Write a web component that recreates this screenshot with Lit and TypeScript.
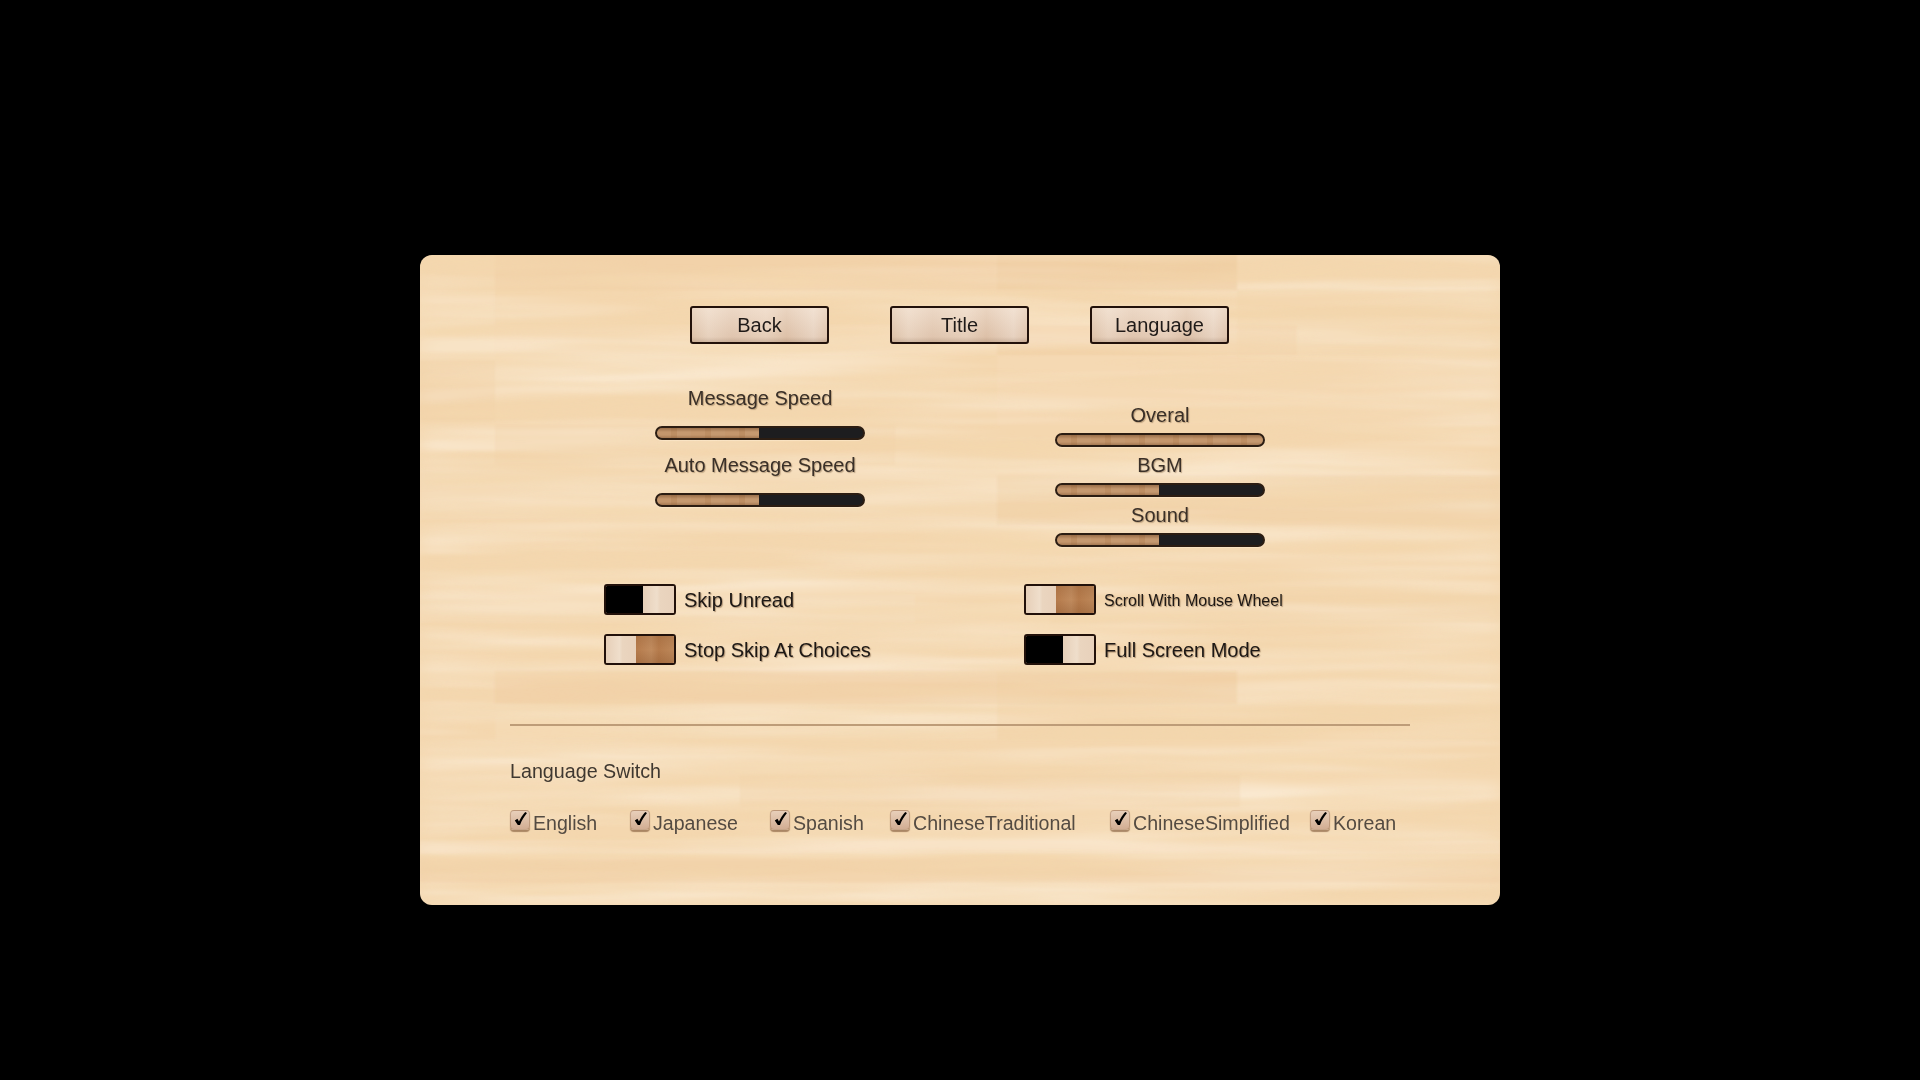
import { LitElement, html, css, svg } from "lit";
import { customElement } from "lit/decorators.js";

const PLANKS: [number, number, number, number, string, number][] = [
  [75, 0, 502, 35, "#eec79a", 0.3],
  [577, 0, 240, 35, "#e9bd8c", 0.3],
  [0, 35, 75, 70, "#f8e3c6", 0.3],
  [0, 105, 75, 60, "#eecba0", 0.25],
  [75, 70, 502, 30, "#f8e2c5", 0.3],
  [577, 70, 300, 30, "#eec79a", 0.25],
  [817, 35, 263, 70, "#f3d3aa", 0.3],
  [75, 170, 400, 40, "#eecba0", 0.2],
  [577, 100, 503, 70, "#f8e2c5", 0.2],
  [0, 215, 577, 50, "#f9e4c8", 0.25],
  [577, 220, 503, 50, "#edc89b", 0.2],
  [75, 416, 502, 33, "#eec79a", 0.28],
  [577, 416, 240, 33, "#e9bd8c", 0.28],
  [0, 340, 495, 28, "#f8e3c6", 0.25],
  [630, 340, 450, 28, "#f0cfa5", 0.25],
  [75, 449, 502, 36, "#f8e2c5", 0.25],
  [577, 449, 503, 36, "#f3d3aa", 0.3],
  [320, 520, 500, 32, "#f0cca0", 0.25],
  [0, 585, 1080, 14, "#f9e6cc", 0.4],
  [0, 605, 1080, 22, "#eecba0", 0.3],
];

const LANGS = ["English", "Japanese", "Spanish", "ChineseTraditional", "ChineseSimplified", "Korean"];

@customElement("app-root")
export class AppRoot extends LitElement {
  static styles = css`
    :host {
      display: flex;
      justify-content: center;
      align-items: flex-start;
      width: 1920px;
      height: 1080px;
      background: #000;
      overflow: hidden;
      font-family: "Liberation Sans", Arial, sans-serif;
      color: #2a2420;
    }
    .panel {
      position: relative;
      box-sizing: border-box;
      width: 1080px;
      height: 650px;
      margin-top: 255px;
      padding-top: 51px;
      border-radius: 12px;
      overflow: hidden;
      background: #f4d7af;
    }
    .wood {
      position: absolute;
      inset: 0;
      width: 100%;
      height: 100%;
    }
    .content {
      position: relative;
    }
    .buttons {
      display: flex;
      justify-content: center;
      gap: 61px;
      padding-right: 1px;
    }
    .btn {
      box-sizing: border-box;
      width: 139px;
      height: 38px;
      display: flex;
      align-items: center;
      justify-content: center;
      border: 2px solid #22110a;
      border-radius: 3px;
      font-size: 20px;
      color: #1f1a18;
      background:
        linear-gradient(180deg, rgba(255, 245, 235, 0.3), rgba(170, 125, 95, 0.08) 85%, rgba(120, 85, 60, 0.25)),
        linear-gradient(90deg, #e2c8b0, #ecd8c5 12%, #e4cbb5 30%, #ebd5c1 55%, #e1c6ae 70%, #ecd9c8 90%, #e4cab3);
    }
    .sliders {
      display: flex;
      justify-content: center;
      gap: 190px;
      margin-top: 39px;
    }
    .col {
      width: 210px;
      display: flex;
      flex-direction: column;
    }
    .col.right {
      margin-top: 17px;
      gap: 3px;
    }
    .col.left {
      gap: 10px;
    }
    .item {
      display: flex;
      flex-direction: column;
    }
    .col.left .item {
      gap: 13px;
    }
    .col.right .item {
      gap: 3px;
    }
    .lab {
      height: 30px;
      line-height: 30px;
      font-size: 20px;
      text-align: center;
      white-space: nowrap;
      color: #3a3028;
      text-shadow: 1px 1px 1px rgba(120, 90, 60, 0.45);
    }
    .track {
      box-sizing: border-box;
      height: 14px;
      border: 2px solid #2c1d12;
      border-radius: 7px;
      background: #1d1d1f;
      overflow: hidden;
      box-shadow: 0 1px 1px rgba(255, 240, 215, 0.5);
    }
    .fill {
      height: 100%;
      background:
        linear-gradient(180deg, rgba(90, 50, 20, 0.4), rgba(90, 50, 20, 0) 40%, rgba(90, 50, 20, 0) 70%, rgba(90, 50, 20, 0.3)),
        repeating-linear-gradient(90deg, #c4966c 0 14px, #bd8e63 14px 20px, #c59970 20px 34px);
    }
    .toggles {
      display: grid;
      grid-template-columns: 420px 420px;
      row-gap: 19px;
      margin: 37px 0 0 184px;
    }
    .row {
      display: flex;
      align-items: center;
      gap: 8px;
      height: 31px;
      font-size: 20px;
      color: #1d1815;
      white-space: nowrap;
      text-shadow: 1px 1px 1px rgba(120, 90, 60, 0.55);
    }
    .row span {
      padding-top: 2px;
    }
    .row.small {
      font-size: 16px;
    }
    .tg {
      box-sizing: border-box;
      width: 72px;
      height: 31px;
      flex: none;
      display: flex;
      border: 2px solid #22110a;
      border-radius: 3px;
      overflow: hidden;
    }
    .tg .light {
      background: linear-gradient(90deg, #e6cfb8, #efdecb 45%, #ead5bf 55%, #e8d1bb);
    }
    .tg .dark {
      background: #000;
      width: 37px;
    }
    .tg.off .light {
      flex: 1;
    }
    .tg.on .light {
      width: 30px;
    }
    .tg .brown {
      flex: 1;
      background:
        linear-gradient(180deg, rgba(110, 60, 25, 0.14), rgba(110, 60, 25, 0) 50%, rgba(110, 60, 25, 0.22)),
        linear-gradient(90deg, #b67b4c, #c08b5e 40%, #b57b4c 60%, #bd885a);
    }
    .rule {
      height: 2px;
      margin: 59px 90px 0;
      background: #bd9c78;
    }
    .switch {
      height: 30px;
      line-height: 29px;
      margin: 31px 90px 0;
      font-size: 19.7px;
      color: #3f3830;
    }
    .langs {
      display: grid;
      grid-template-columns: 120px 140px 120px 220px 200px auto;
      margin: 23px 90px 0;
    }
    .lang {
      display: flex;
      align-items: flex-start;
      gap: 3px;
      height: 30px;
      font-size: 19.6px;
      color: #544b42;
      white-space: nowrap;
    }
    .lang span {
      line-height: 26px;
    }
    .cb {
      box-sizing: border-box;
      width: 20px;
      height: 20px;
      flex: none;
      border-radius: 4px;
      background: linear-gradient(180deg, #e8cfba, #d2ae93);
      border: 1px solid rgba(165, 125, 92, 0.5);
      box-shadow: 0 2px 1px rgba(120, 78, 46, 0.6);
    }
    .cb svg {
      display: block;
      margin: -1px;
    }
  `;

  private slider(label: string, pct: number) {
    return html`<div class="item">
      <div class="lab">${label}</div>
      <div class="track"><div class="fill" style="width:${pct}%"></div></div>
    </div>`;
  }

  private toggle(label: string, on: boolean, small = false) {
    return html`<div class="row ${small ? "small" : ""}">
      <div class="tg ${on ? "on" : "off"}">
        ${on
          ? html`<div class="light"></div><div class="brown"></div>`
          : html`<div class="dark"></div><div class="light"></div>`}
      </div>
      <span>${label}</span>
    </div>`;
  }

  render() {
    return html`<div class="panel">
      <svg class="wood" viewBox="0 0 1080 650" preserveAspectRatio="none" aria-hidden="true">
        <defs>
          <filter id="streak" x="0" y="0" width="100%" height="100%">
            <feTurbulence type="fractalNoise" baseFrequency="0.004 0.06" numOctaves="3" seed="11" />
            <feColorMatrix values="0 0 0 0 0.90  0 0 0 0 0.68  0 0 0 0 0.42  1.7 0 0 0 -0.68" />
            <feGaussianBlur stdDeviation="8 0.8" />
          </filter>
          <filter id="light" x="0" y="0" width="100%" height="100%">
            <feTurbulence type="fractalNoise" baseFrequency="0.002 0.04" numOctaves="3" seed="29" />
            <feColorMatrix values="0 0 0 0 0.98  0 0 0 0 0.88  0 0 0 0 0.74  1.5 0 0 0 -0.55" />
            <feGaussianBlur stdDeviation="10 1" />
          </filter>
          <filter id="soft" x="-2%" y="-20%" width="104%" height="140%">
            <feGaussianBlur stdDeviation="1.2" />
          </filter>
        </defs>
        <rect width="1080" height="650" filter="url(#light)" />
        <g filter="url(#soft)">
          ${PLANKS.map(
            ([x, y, w, h, c, o]) => svg`<rect x=${x} y=${y} width=${w} height=${h} fill=${c} opacity=${o} />`
          )}
        </g>
        <rect width="1080" height="650" filter="url(#streak)" />
      </svg>
      <div class="content">
        <div class="buttons">
          <div class="btn">Back</div>
          <div class="btn">Title</div>
          <div class="btn">Language</div>
        </div>
        <div class="sliders">
          <div class="col left">
            ${this.slider("Message Speed", 49.5)}
            ${this.slider("Auto Message Speed", 49.5)}
          </div>
          <div class="col right">
            ${this.slider("Overal", 100)}
            ${this.slider("BGM", 49.5)}
            ${this.slider("Sound", 49.5)}
          </div>
        </div>
        <div class="toggles">
          ${this.toggle("Skip Unread", false)}
          ${this.toggle("Scroll With Mouse Wheel", true, true)}
          ${this.toggle("Stop Skip At Choices", true)}
          ${this.toggle("Full Screen Mode", false)}
        </div>
        <div class="rule"></div>
        <div class="switch">Language Switch</div>
        <div class="langs">
          ${LANGS.map(
            (l) => html`<div class="lang">
              <div class="cb">
                <svg width="20" height="20" viewBox="0 0 20 20">
                  <path d="M4.8 10.4 L7.4 8.8 L9 11.4 C10.6 8 12.6 4.8 15.2 2 L17 3 C14.2 6.6 11.8 10.2 10 15 L7.8 15 Z" fill="#000" />
                </svg>
              </div>
              <span>${l}</span>
            </div>`
          )}
        </div>
      </div>
    </div>`;
  }
}
